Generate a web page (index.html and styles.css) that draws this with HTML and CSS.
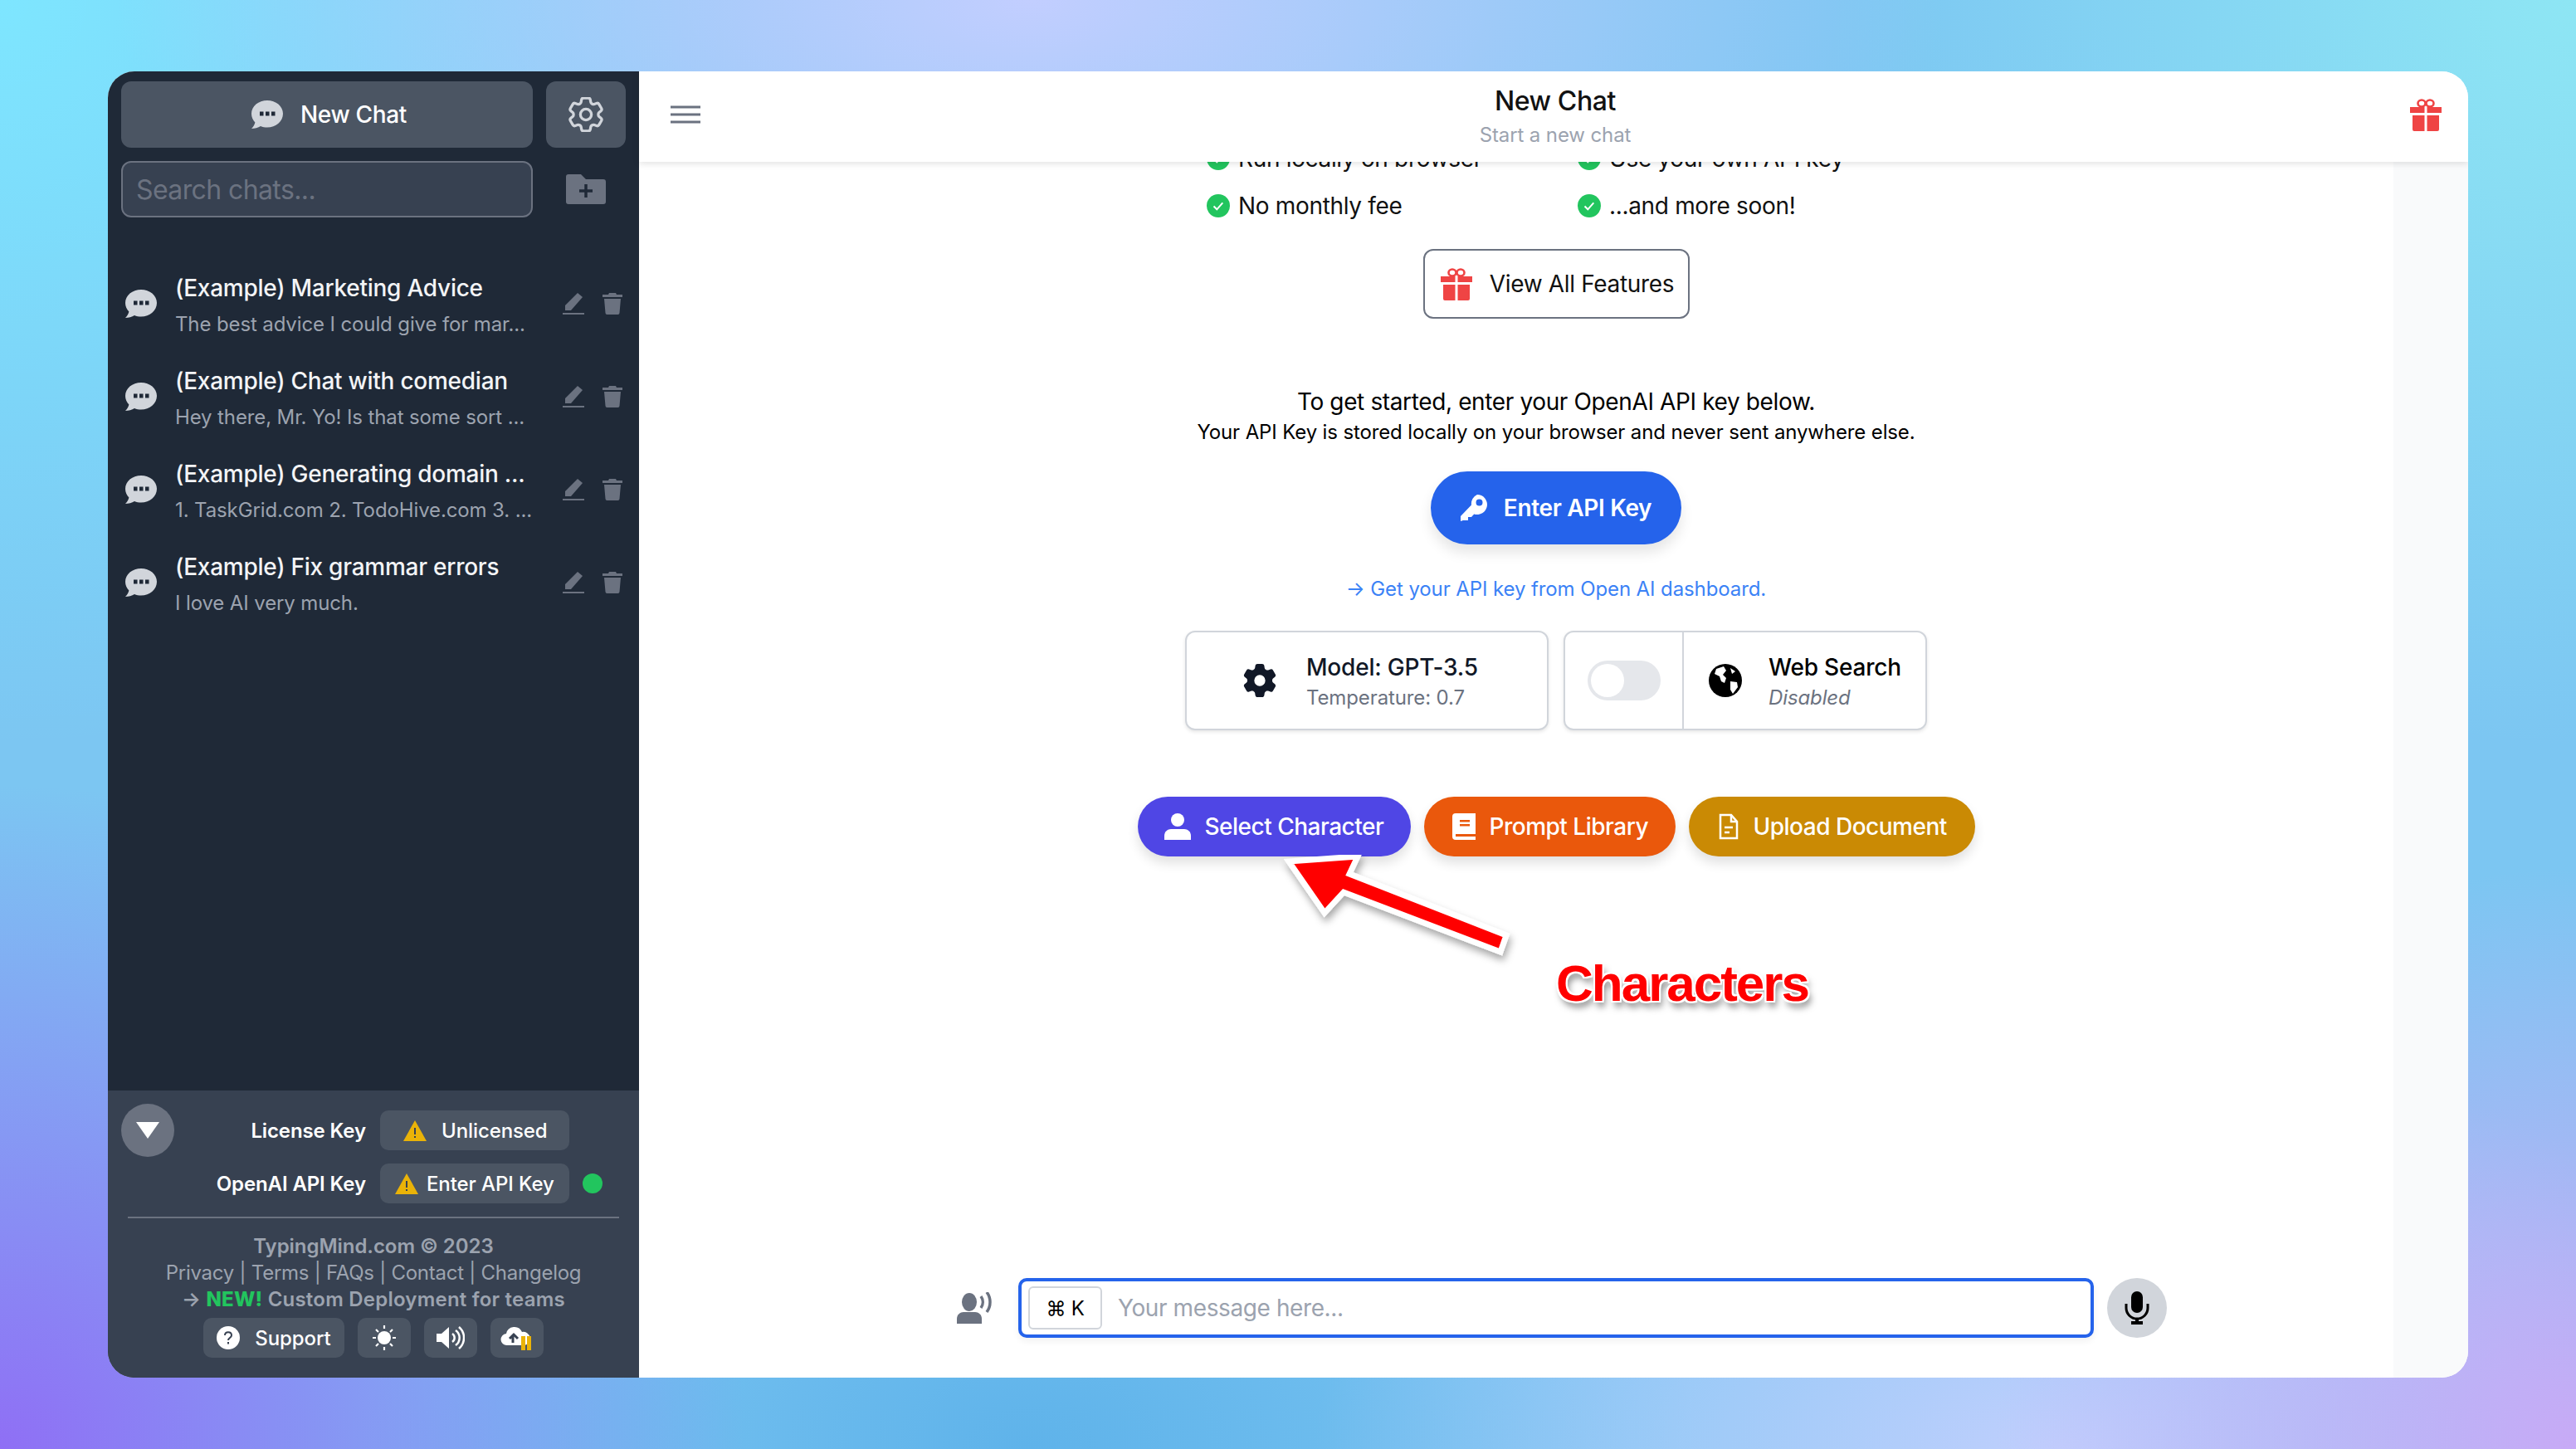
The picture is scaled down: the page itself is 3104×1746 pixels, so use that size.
FILE: index.html
```html
<!DOCTYPE html>
<html lang="en">
<head>
  <meta charset="UTF-8">
  <title>TypingMind</title>
  <link rel="stylesheet" href="styles.css">
</head>
<body>
  <svg class="defs" width="0" height="0">
    <symbol id="bubble" viewBox="0 0 38 34">
      <path d="M19 0C8.5 0 0 6.9 0 16c0 4 1.7 7.6 4.4 10.4C3.6 29.5 2 32 0 34c4 0 8-1 11-3 2.500 1 5.200 1.500 8 1.500 10.500 0 19-7.400 19-16.500S29.500 0 19 0z"/>
      <rect class="hole" x="10" y="13.500" width="4.500" height="5"/>
      <rect class="hole" x="17" y="13.500" width="4.500" height="5"/>
      <rect class="hole" x="24" y="13.500" width="4.500" height="5"/>
    </symbol>
    <symbol id="pen" viewBox="0 0 26 26">
      <path d="M18 0l6 5L10 21H3v-6z"/><rect x="0" y="24" width="26" height="2"/>
    </symbol>
    <symbol id="trash" viewBox="0 0 24 26">
      <path d="M8 0h8l1 2h7v3H0V2h7zM2 7h20l-1.500 17a2 2 0 0 1-2 2h-13a2 2 0 0 1-2-2z"/>
    </symbol>
    <symbol id="gift" viewBox="0 0 38 39">
      <path d="M0 10h17.500v7H0zM20.500 10H38v7H20.500zM3 20h14.500v19H5a2 2 0 0 1-2-2zM20.500 20H35v17a2 2 0 0 1-2 2H20.500z"/>
      <ellipse cx="14" cy="5.500" rx="4.500" ry="4" fill="none" stroke="currentColor" stroke-width="2.600"/>
      <ellipse cx="24" cy="5.500" rx="4.500" ry="4" fill="none" stroke="currentColor" stroke-width="2.600"/>
    </symbol>
    <symbol id="check" viewBox="0 0 28 28">
      <circle cx="14" cy="14" r="14" fill="#22c55e"/>
      <path d="M8.500 14.500l3.800 3.800 7-8" fill="none" stroke="#fff" stroke-width="2"/>
    </symbol>
    <symbol id="warn" viewBox="0 0 28 25">
      <path d="M14 0l14 25H0z" fill="#eab308"/>
      <rect x="13" y="9" width="2" height="8" fill="#374151"/><rect x="13" y="19" width="2" height="2" fill="#374151"/>
    </symbol>
  </svg>

  <div class="app">
    <aside class="sidebar">
      <div class="side-top">
        <button class="new-chat">
          <svg class="bubble-ic light" width="38" height="34"><use href="#bubble"/></svg>
          New Chat
        </button>
        <button class="settings">
          <svg width="42" height="42" viewBox="2.500 2.500 19 19" fill="none" stroke="#d1d5db" stroke-width="1.500">
            <path d="M9.594 3.940c.09-.542.56-.94 1.110-.94h2.593c.55 0 1.020.398 1.110.94l.213 1.281c.063.374.313.686.645.87.074.04.147.083.22.127.324.196.72.257 1.075.124l1.217-.456a1.125 1.125 0 011.370.49l1.296 2.247a1.125 1.125 0 01-.26 1.431l-1.003.827c-.293.24-.438.613-.431.992a6.759 6.759 0 010 .255c-.007.378.138.75.43.99l1.005.828c.424.35.534.954.26 1.430l-1.298 2.247a1.125 1.125 0 01-1.369.491l-1.217-.456c-.355-.133-.75-.072-1.076.124a6.570 6.570 0 01-.22.128c-.331.183-.581.495-.644.869l-.213 1.280c-.09.543-.56.941-1.110.941h-2.594c-.55 0-1.020-.398-1.110-.94l-.213-1.281c-.062-.374-.312-.686-.644-.87a6.520 6.520 0 01-.22-.127c-.325-.196-.72-.257-1.076-.124l-1.217.456a1.125 1.125 0 01-1.369-.49l-1.297-2.247a1.125 1.125 0 01.26-1.431l1.004-.827c.292-.24.437-.613.43-.992a6.932 6.932 0 010-.255c.007-.378-.138-.75-.43-.99l-1.004-.828a1.125 1.125 0 01-.26-1.430l1.297-2.247a1.125 1.125 0 011.370-.491l1.216.456c.356.133.751.072 1.076-.124.072-.044.146-.087.22-.128.332-.183.582-.495.644-.869l.214-1.281z"/>
            <circle cx="12" cy="12" r="3"/>
          </svg>
        </button>
        <div class="search">Search chats...</div>
        <div class="new-folder">
          <svg width="48" height="36" viewBox="0 0 48 36">
            <path d="M0 3a3 3 0 0 1 3-3h15l6 6h21a3 3 0 0 1 3 3v24a3 3 0 0 1-3 3H3a3 3 0 0 1-3-3z" fill="#6b7280"/>
            <path d="M24 12v16M16 20h16" stroke="#1f2937" stroke-width="3.500"/>
          </svg>
        </div>
      </div>

      <ul class="chat-list">
        <li class="chat-item">
          <svg class="bubble-ic" width="38" height="34"><use href="#bubble"/></svg>
          <div class="chat-text">
            <div class="chat-title">(Example) Marketing Advice</div>
            <div class="chat-sub">The best advice I could give for mar...</div>
          </div>
          <svg class="act" width="26" height="26"><use href="#pen"/></svg>
          <svg class="act" width="24" height="26"><use href="#trash"/></svg>
        </li>
        <li class="chat-item">
          <svg class="bubble-ic" width="38" height="34"><use href="#bubble"/></svg>
          <div class="chat-text">
            <div class="chat-title">(Example) Chat with comedian</div>
            <div class="chat-sub">Hey there, Mr. Yo! Is that some sort ...</div>
          </div>
          <svg class="act" width="26" height="26"><use href="#pen"/></svg>
          <svg class="act" width="24" height="26"><use href="#trash"/></svg>
        </li>
        <li class="chat-item">
          <svg class="bubble-ic" width="38" height="34"><use href="#bubble"/></svg>
          <div class="chat-text">
            <div class="chat-title">(Example) Generating domain ...</div>
            <div class="chat-sub">1. TaskGrid.com 2. TodoHive.com 3. ...</div>
          </div>
          <svg class="act" width="26" height="26"><use href="#pen"/></svg>
          <svg class="act" width="24" height="26"><use href="#trash"/></svg>
        </li>
        <li class="chat-item">
          <svg class="bubble-ic" width="38" height="34"><use href="#bubble"/></svg>
          <div class="chat-text">
            <div class="chat-title">(Example) Fix grammar errors</div>
            <div class="chat-sub">I love AI very much.</div>
          </div>
          <svg class="act" width="26" height="26"><use href="#pen"/></svg>
          <svg class="act" width="24" height="26"><use href="#trash"/></svg>
        </li>
      </ul>

      <div class="side-panel">
        <div class="keys">
          <div class="collapse">
            <svg width="28" height="20" viewBox="0 0 28 20"><path d="M0 0h28L14 20z" fill="#fff"/></svg>
          </div>
          <div class="key-label">License Key</div>
          <div class="key-pill pill-a"><svg width="28" height="25"><use href="#warn"/></svg>Unlicensed</div>
          <div></div>
          <div></div>
          <div class="key-label">OpenAI API Key</div>
          <div class="key-pill pill-b"><svg width="28" height="25"><use href="#warn"/></svg>Enter API Key</div>
          <div class="dot"></div>
        </div>
        <div class="rule"></div>
        <div class="credits">
          <div class="credit-strong">TypingMind.com © 2023</div>
          <div class="credit-links">Privacy | Terms | FAQs | Contact | Changelog</div>
          <div class="credit-strong credit-new">→ <span class="new">NEW!</span> Custom Deployment for teams</div>
        </div>
        <div class="tools">
          <div class="tool tool-wide">
            <svg width="28" height="28" viewBox="0 0 28 28"><circle cx="14" cy="14" r="14" fill="#fff"/><path d="M10 11c0-5 8-5 8 0 0 3-4 3-4 6" fill="none" stroke="#374151" stroke-width="2"/><rect x="13" y="19" width="2" height="2.500" fill="#374151"/></svg>
            Support
          </div>
          <div class="tool">
            <svg width="28" height="30" viewBox="0 0 28 30" fill="#fff"><circle cx="14" cy="15" r="8"/><path d="M14 0v4M14 26v4M0 15h4M24 15h4M4 5l3 3M21 22l3 3M24 5l-3 3M7 22l-3 3" stroke="#fff" stroke-width="2.200"/></svg>
          </div>
          <div class="tool">
            <svg width="34" height="28" viewBox="0 0 34 28"><path d="M0 9h6l9-8v26l-9-8H0z" fill="#fff"/><path d="M19 9a6 6 0 0 1 0 10M23 5a11 11 0 0 1 0 18M27 1a17 17 0 0 1 0 26" fill="none" stroke="#fff" stroke-width="2.500"/></svg>
          </div>
          <div class="tool">
            <svg width="40" height="30" viewBox="0 0 40 30"><path d="M8 24a7 7 0 0 1-1-14A10 10 0 0 1 26 8a8 8 0 0 1 3 16z" fill="#fff"/><path d="M15 21v-8M11 16l5-5 5 5" fill="none" stroke="#374151" stroke-width="3"/><path d="M25 13h5v17h-5zM32 13h5v17h-5z" fill="#eab308"/></svg>
          </div>
        </div>
      </div>
    </aside>

    <main class="main">
      <header class="topbar">
        <svg class="burger" width="36" height="22" viewBox="0 0 36 22"><path d="M0 2h36M0 11h36M0 20h36" stroke="#6b7280" stroke-width="3"/></svg>
        <div class="topbar-title">
          <div class="title">New Chat</div>
          <div class="subtitle">Start a new chat</div>
        </div>
        <svg class="gift-red top-gift" width="38" height="39"><use href="#gift"/></svg>
      </header>

      <div class="chat-body">
        <div class="content">
          <div class="features">
            <div class="feature"><svg width="28" height="28"><use href="#check"/></svg>Run locally on browser</div>
            <div class="feature"><svg width="28" height="28"><use href="#check"/></svg>Use your own API key</div>
            <div class="feature"><svg width="28" height="28"><use href="#check"/></svg>No monthly fee</div>
            <div class="feature"><svg width="28" height="28"><use href="#check"/></svg>...and more soon!</div>
          </div>

          <button class="view-all"><svg class="gift-red" width="38" height="39"><use href="#gift"/></svg>View All Features</button>

          <p class="intro">To get started, enter your OpenAI API key below.</p>
          <p class="intro-small">Your API Key is stored locally on your browser and never sent anywhere else.</p>

          <button class="api-btn">
            <svg width="32" height="32" viewBox="0 0 32 32" fill="#fff"><path d="M20 0a12 12 0 1 1-3.800 23.400L13 27H9v4H3l-3 1v-6l13-13.500A12 12 0 0 1 20 0zm2.500 5.500a4 4 0 1 0 0 8 4 4 0 0 0 0-8z" fill-rule="evenodd"/></svg>
            Enter API Key
          </button>
          <a class="api-link">→ Get your API key from Open AI dashboard.</a>

          <div class="cards">
            <div class="card card-model">
              <svg width="40" height="42" viewBox="3 3 18 18"><path fill="#111827" fill-rule="evenodd" d="M9.594 3.940c.09-.542.56-.94 1.110-.94h2.593c.55 0 1.020.398 1.110.94l.213 1.281c.063.374.313.686.645.87l.22.127c.324.196.72.257 1.075.124l1.217-.456a1.125 1.125 0 011.370.49l1.296 2.247a1.125 1.125 0 01-.26 1.431l-1.003.827c-.293.24-.438.613-.431.992v.255c-.007.378.138.75.43.99l1.005.828c.424.35.534.954.26 1.430l-1.298 2.247a1.125 1.125 0 01-1.369.491l-1.217-.456c-.355-.133-.75-.072-1.076.124l-.22.128c-.331.183-.581.495-.644.869l-.213 1.280c-.09.543-.56.941-1.110.941h-2.594c-.55 0-1.020-.398-1.110-.94l-.213-1.281c-.062-.374-.312-.686-.644-.87l-.22-.127c-.325-.196-.72-.257-1.076-.124l-1.217.456a1.125 1.125 0 01-1.369-.49l-1.297-2.247a1.125 1.125 0 01.26-1.431l1.004-.827c.292-.24.437-.613.43-.992v-.255c.007-.378-.138-.75-.43-.99l-1.004-.828a1.125 1.125 0 01-.26-1.430l1.297-2.247a1.125 1.125 0 011.370-.491l1.216.456c.356.133.751.072 1.076-.124l.22-.128c.332-.183.582-.495.644-.869l.214-1.281zM12 9a3 3 0 1 0 0 6 3 3 0 0 0 0-6z"/></svg>
              <div class="card-text">
                <div class="card-title">Model: GPT-3.5</div>
                <div class="card-sub">Temperature: 0.7</div>
              </div>
            </div>
            <div class="card card-search">
              <div class="toggle-cell"><div class="toggle"><div class="knob"></div></div></div>
              <div class="search-cell">
                <svg width="40" height="40" viewBox="0 0 40 40"><circle cx="20" cy="20" r="20"/><path d="M9 6l9-3 3 5-4 5 4 4-2 6-4-2-2-6-6-3zM26 21l8 1 1 6-6 8-3-5zM26 5l6 4-4 3z" fill="#fff"/></svg>
                <div class="card-text">
                  <div class="card-title black">Web Search</div>
                  <div class="card-sub italic">Disabled</div>
                </div>
              </div>
            </div>
          </div>

          <div class="actions">
            <button class="action indigo">
              <svg width="32" height="32" viewBox="0 0 32 32" fill="#fff"><circle cx="16" cy="8" r="8"/><path d="M0 32v-5c0-5 4-8 8-8h16c4 0 8 3 8 8v5z"/></svg>
              Select Character
            </button>
            <button class="action orange">
              <svg width="28" height="32" viewBox="0 0 28 32"><path d="M4 0h24v32H4a4 4 0 0 1-4-4V4a4 4 0 0 1 4-4z" fill="#fff"/><path d="M9 8h12v2.500H9zM9 13h12v2.500H9zM4 25h24v3H4z" fill="#ea580c"/></svg>
              Prompt Library
            </button>
            <button class="action amber">
              <svg width="24" height="32" viewBox="0 0 24 32" fill="none" stroke="#fff" stroke-width="2.500"><path d="M2 2h13l7 8v20H2z"/><path d="M15 2v8h7M7 17h10M7 23h6"/></svg>
              Upload Document
            </button>
          </div>

          <svg class="arrow" width="300" height="150" viewBox="0 0 300 150">
            <defs>
              <filter id="soft" x="-20%" y="-20%" width="140%" height="140%"><feDropShadow dx="2" dy="6" stdDeviation="5" flood-color="#000" flood-opacity=".35"/></filter>
            </defs>
            <path d="M23 8l83-6-10 21 189 74-7 20-189-72-23 25z" fill="#f00" stroke="#fff" stroke-width="7" stroke-linejoin="miter" filter="url(#soft)"/>
          </svg>
          <div class="annotation">Characters</div>
        </div>

        <div class="composer">
          <svg width="44" height="38" viewBox="0 0 44 38" fill="#6b7280"><ellipse cx="15" cy="12" rx="9" ry="11"/><path d="M0 38v-6c0-5 4-8 8-8h14c4 0 8 3 8 8v6z"/><path d="M29 5a12 12 0 0 1 0 14M36 0a20 20 0 0 1 0 24" fill="none" stroke="#6b7280" stroke-width="3.500"/></svg>
          <div class="input">
            <span class="kbd">⌘ K</span>
            <span class="placeholder">Your message here...</span>
          </div>
          <div class="mic">
            <svg width="30" height="40" viewBox="0 0 30 40" fill="#000"><rect x="8" y="0" width="14" height="26" rx="7"/><path d="M2 15v5a13 13 0 0 0 26 0v-5" fill="none" stroke="#000" stroke-width="3"/><path d="M13 32h4v4h5v4H8v-4h5z"/></svg>
          </div>
        </div>
      </div>
    </main>
  </div>
</body>
</html>
```

FILE: styles.css
```css
html, body {
  margin: 0;
  padding: 0;
}

body {
  width: 3104px;
  height: 1746px;
  box-sizing: border-box;
  padding: 86px 130px;
  overflow: hidden;
  font-family: Inter, "Noto Sans", sans-serif;
  letter-spacing: -.33px;
  background-color: #7cc6f2;
  background-image:
    radial-gradient(900px 800px at 0% 100%, #8f6ff5 0%, rgba(143,111,245,0) 100%),
    radial-gradient(700px 700px at 100% 100%, #c8aaf6 0%, rgba(200,170,246,0) 100%),
    radial-gradient(900px 500px at 80% 100%, #c0cffd 0%, rgba(192,207,253,0) 100%),
    radial-gradient(800px 500px at 40% 100%, #5fb3ea 0%, rgba(95,179,234,0) 100%),
    radial-gradient(1100px 500px at 40% 0%, #c2ceff 0%, rgba(194,206,255,0) 100%),
    radial-gradient(900px 900px at 0% 0%, #7ee6ff 0%, rgba(126,230,255,0) 100%),
    radial-gradient(900px 900px at 100% 0%, #8ee6f4 0%, rgba(142,230,244,0) 100%);
}

.defs {
  position: absolute;
}

button {
  font-family: inherit;
  letter-spacing: inherit;
  border: none;
  cursor: pointer;
}

.app {
  display: flex;
  height: 1574px;
  border-radius: 32px;
  overflow: hidden;
  background: #fff;
}

/* sidebar */
.sidebar {
  width: 640px;
  flex: none;
  display: flex;
  flex-direction: column;
  background: #1f2937;
}

.side-top {
  display: grid;
  grid-template-columns: 496px 96px;
  gap: 16px;
  padding: 12px 16px 0;
}

.new-chat {
  height: 80px;
  display: flex;
  align-items: center;
  justify-content: center;
  gap: 21px;
  padding: 0 0 0 5px;
  background: #4b5563;
  border-radius: 12px;
  color: #fff;
  font-size: 28px;
  font-weight: 500;
}

.settings {
  height: 80px;
  display: flex;
  align-items: center;
  justify-content: center;
  padding: 0;
  background: #4b5563;
  border-radius: 12px;
}

.search {
  height: 68px;
  box-sizing: border-box;
  display: flex;
  align-items: center;
  padding: 0 16px;
  background: #374151;
  border: 2px solid #6b7280;
  border-radius: 12px;
  color: #6b7280;
  font-size: 32px;
  letter-spacing: -.6px;
}

.new-folder {
  display: flex;
  align-items: center;
  justify-content: center;
}

.bubble-ic {
  fill: #d1d5db;
  flex: none;
}

.hole {
  fill: #1f2937;
}

.new-chat .hole {
  fill: #4b5563;
}

.chat-list {
  list-style: none;
  margin: 48px 0 0;
  padding: 0;
}

.chat-item {
  height: 112px;
  display: flex;
  align-items: center;
  padding: 0 20px 0 21px;
}

.chat-text {
  flex: 1;
  min-width: 0;
  margin-left: 22px;
  padding-top: 3px;
}

.chat-title {
  color: #f3f4f6;
  font-size: 28px;
  font-weight: 500;
  line-height: 40px;
  letter-spacing: -.25px;
  white-space: nowrap;
}

.chat-sub {
  margin-top: 6px;
  color: #9ca3af;
  font-size: 24px;
  line-height: 36px;
  letter-spacing: -.12px;
  white-space: nowrap;
}

.act {
  flex: none;
  fill: #6b7280;
  margin-left: 22px;
}

.side-panel {
  margin-top: auto;
  height: 346px;
  box-sizing: border-box;
  padding: 24px 16px 0;
  background: #374151;
}

.keys {
  display: grid;
  grid-template-columns: 64px 231px 228px 24px;
  grid-auto-rows: 48px;
  row-gap: 16px;
  align-items: center;
}

.collapse {
  width: 64px;
  height: 64px;
  margin: -8px 0;
  display: flex;
  align-items: center;
  justify-content: center;
  border-radius: 50%;
  background: #6b7280;
}

.key-label {
  color: #fff;
  font-size: 24px;
  font-weight: 600;
  letter-spacing: -.12px;
  text-align: right;
}

.key-pill {
  height: 48px;
  margin-left: 17px;
  width: 228px;
  box-sizing: border-box;
  display: flex;
  align-items: center;
  background: #4b5563;
  border-radius: 10px;
  color: #fff;
  font-size: 24px;
  font-weight: 500;
  letter-spacing: -.1px;
  white-space: nowrap;
}

.pill-a {
  padding-left: 28px;
  gap: 18px;
}

.pill-b {
  padding-left: 18px;
  gap: 10px;
}

.dot {
  width: 24px;
  height: 24px;
  margin-left: 33px;
  border-radius: 50%;
  background: #22c55e;
}

.rule {
  height: 2px;
  margin: 16px 8px 0;
  background: #6b7280;
}

.credits {
  margin-top: 18px;
  text-align: center;
  color: #9ca3af;
  font-size: 24px;
  line-height: 32px;
  letter-spacing: 0;
}

.credit-links {
  letter-spacing: -.25px;
}

.credit-strong {
  font-weight: 600;
  letter-spacing: -.05px;
}

.credit-new {
  letter-spacing: .22px;
}

.new {
  color: #22c55e;
  font-weight: 800;
}

.tools {
  display: flex;
  justify-content: center;
  gap: 16px;
  margin-top: 6px;
}

.tool {
  width: 64px;
  height: 48px;
  display: flex;
  align-items: center;
  justify-content: center;
  background: #4b5563;
  border-radius: 10px;
  color: #fff;
  font-size: 24px;
  font-weight: 500;
  letter-spacing: -.1px;
}

.tool-wide {
  width: 170px;
  gap: 18px;
}

/* main area */
.main {
  flex: 1;
  min-width: 0;
  display: flex;
  flex-direction: column;
}

.topbar {
  position: relative;
  z-index: 2;
  height: 109px;
  flex: none;
  display: flex;
  align-items: center;
  justify-content: space-between;
  padding: 0 32px 0 38px;
  background: #fff;
  box-shadow: 0 2px 8px rgba(0, 0, 0, .12);
}

.burger {
  margin-top: -6px;
}

.top-gift {
  margin-top: -5px;
}

.topbar-title {
  text-align: center;
  padding-top: 2px;
}

.title {
  font-size: 32px;
  font-weight: 500;
  line-height: 40px;
  color: #111;
  letter-spacing: -.4px;
}

.subtitle {
  margin-top: 3px;
  font-size: 24px;
  line-height: 36px;
  color: #9ca3af;
  letter-spacing: -.12px;
}

.gift-red {
  color: #ef4444;
  fill: #ef4444;
  flex: none;
}

.chat-body {
  flex: 1;
  min-height: 0;
  display: flex;
  flex-direction: column;
  overflow: hidden;
  background: linear-gradient(to right, #fff 2114px, #f9fafb 2114px);
}

.content {
  position: relative;
  flex: 1;
  display: flex;
  flex-direction: column;
  align-items: center;
  margin-top: -24px;
  padding-left: 6px;
}

.features {
  display: grid;
  grid-template-columns: 447px 395px;
  grid-auto-rows: 40px;
  row-gap: 17px;
}

.feature {
  display: flex;
  align-items: center;
  gap: 10px;
  font-size: 28px;
  color: #111;
  white-space: nowrap;
}

.view-all {
  margin-top: 32px;
  width: 321px;
  height: 84px;
  display: flex;
  align-items: center;
  justify-content: center;
  gap: 21px;
  padding: 0 0 0 3px;
  background: #fff;
  border: 2px solid #6b7280;
  border-radius: 12px;
  color: #111;
  font-size: 28px;
}

.intro {
  margin: 80px 0 0;
  font-size: 28px;
  line-height: 40px;
  color: #000;
  letter-spacing: -.37px;
}

.intro-small {
  margin: 1px 0 0;
  font-size: 24px;
  line-height: 32px;
  color: #000;
  letter-spacing: -.13px;
}

.api-btn {
  margin-top: 31px;
  width: 302px;
  height: 88px;
  display: flex;
  align-items: center;
  justify-content: center;
  gap: 20px;
  padding: 0;
  background: #2563eb;
  border-radius: 44px;
  color: #fff;
  font-size: 28px;
  font-weight: 600;
  box-shadow: 0 10px 16px rgba(0, 0, 0, .1);
}

.api-link {
  margin-top: 38px;
  font-size: 24px;
  line-height: 32px;
  color: #3b82f6;
  letter-spacing: -.1px;
}

.cards {
  display: flex;
  gap: 18px;
  margin-top: 34px;
}

.card {
  width: 438px;
  height: 120px;
  box-sizing: border-box;
  display: flex;
  align-items: center;
  background: #fff;
  border: 2px solid #d1d5db;
  border-radius: 12px;
  box-shadow: 0 2px 4px rgba(0, 0, 0, .1);
}

.card-model {
  padding-left: 68px;
  gap: 36px;
}

.card-text {
  padding-top: 4px;
}

.card-title {
  font-size: 28px;
  font-weight: 500;
  line-height: 38px;
  letter-spacing: -.2px;
  color: #111827;
}

.black {
  color: #000;
}

.card-sub {
  font-size: 24px;
  line-height: 36px;
  color: #6b7280;
  letter-spacing: -.12px;
}

.italic {
  font-style: italic;
}

.toggle-cell {
  width: 141px;
  height: 100%;
  display: flex;
  align-items: center;
  justify-content: center;
  border-right: 2px solid #d1d5db;
}

.toggle {
  width: 88px;
  height: 48px;
  border-radius: 24px;
  background: #e5e7eb;
}

.knob {
  width: 40px;
  height: 40px;
  margin: 4px;
  border-radius: 50%;
  background: #fff;
}

.search-cell {
  display: flex;
  align-items: center;
  gap: 32px;
  padding-left: 30px;
}

.actions {
  display: flex;
  gap: 16px;
  margin-top: 80px;
}

.action {
  height: 72px;
  box-sizing: border-box;
  display: flex;
  align-items: center;
  gap: 17px;
  padding: 0 0 0 32px;
  border-radius: 36px;
  color: #fff;
  font-size: 28px;
  font-weight: 500;
  letter-spacing: -.5px;
  white-space: nowrap;
  box-shadow: 0 8px 14px rgba(0, 0, 0, .12);
}

.indigo { width: 329px; background: #4f46e5; }
.orange { width: 303px; padding-left: 34px; background: #ea580c; }
.amber { width: 345px; padding-left: 36px; gap: 18px; background: #ca8a04; }

.arrow {
  position: absolute;
  left: 760px;
  top: 859px;
}

.annotation {
  position: absolute;
  left: 1105px;
  top: 979px;
  font-family: "Liberation Sans", Arial, sans-serif;
  font-size: 62px;
  font-weight: 700;
  line-height: 70px;
  letter-spacing: -2px;
  color: #f00;
  text-shadow:
    2px 0 0 #fff, -2px 0 0 #fff, 0 2px 0 #fff, 0 -2px 0 #fff,
    2px 2px 0 #fff, -2px 2px 0 #fff, 2px -2px 0 #fff, -2px -2px 0 #fff,
    3px 7px 8px rgba(0, 0, 0, .5);
}

.composer {
  flex: none;
  display: flex;
  align-items: center;
  justify-content: center;
  padding: 0 0 48px 20px;
}

.input {
  width: 1296px;
  height: 72px;
  box-sizing: border-box;
  margin: 0 16px 0 30px;
  display: flex;
  align-items: center;
  padding-left: 8px;
  background: #fff;
  border: 4px solid #2563eb;
  border-radius: 10px;
  box-shadow: 0 4px 8px rgba(0, 0, 0, .06);
}

.kbd {
  width: 89px;
  height: 52px;
  box-sizing: border-box;
  display: flex;
  align-items: center;
  justify-content: center;
  border: 2px solid #d1d5db;
  border-radius: 6px;
  font-size: 24px;
  color: #000;
}

.placeholder {
  margin-left: 19px;
  font-size: 28px;
  letter-spacing: -.4px;
  color: #9ca3af;
}

.mic {
  width: 72px;
  height: 72px;
  display: flex;
  align-items: center;
  justify-content: center;
  border-radius: 50%;
  background: #d1d5db;
}
```
